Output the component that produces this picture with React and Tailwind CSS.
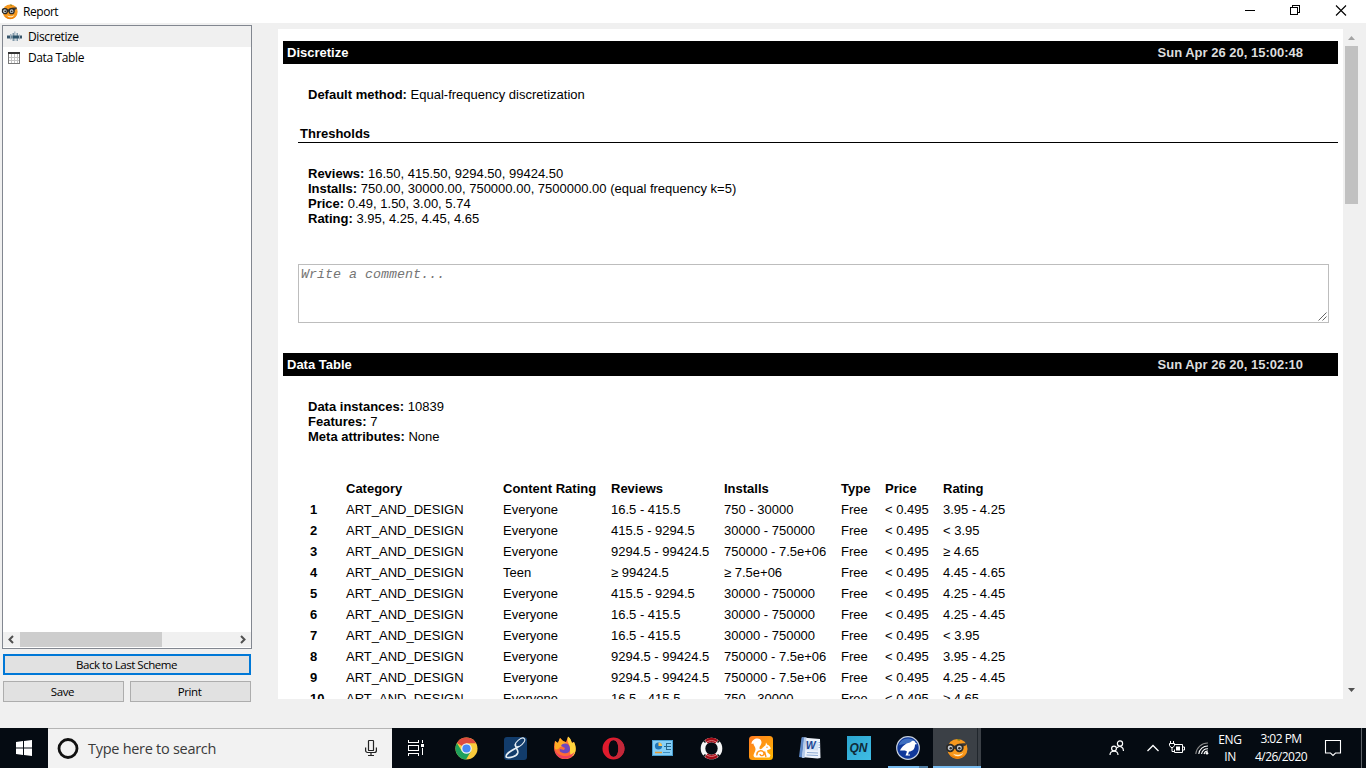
import React from "react";

const thresholds = [
  ["Reviews:", "16.50, 415.50, 9294.50, 99424.50"],
  ["Installs:", "750.00, 30000.00, 750000.00, 7500000.00 (equal frequency k=5)"],
  ["Price:", "0.49, 1.50, 3.00, 5.74"],
  ["Rating:", "3.95, 4.25, 4.45, 4.65"],
];

const summary = [
  ["Data instances:", "10839"],
  ["Features:", "7"],
  ["Meta attributes:", "None"],
];

const rows = [
  ["Everyone", "16.5 - 415.5", "750 - 30000", "3.95 - 4.25"],
  ["Everyone", "415.5 - 9294.5", "30000 - 750000", "< 3.95"],
  ["Everyone", "9294.5 - 99424.5", "750000 - 7.5e+06", "≥ 4.65"],
  ["Teen", "≥ 99424.5", "≥ 7.5e+06", "4.45 - 4.65"],
  ["Everyone", "415.5 - 9294.5", "30000 - 750000", "4.25 - 4.45"],
  ["Everyone", "16.5 - 415.5", "30000 - 750000", "4.25 - 4.45"],
  ["Everyone", "16.5 - 415.5", "30000 - 750000", "< 3.95"],
  ["Everyone", "9294.5 - 99424.5", "750000 - 7.5e+06", "3.95 - 4.25"],
  ["Everyone", "9294.5 - 99424.5", "750000 - 7.5e+06", "4.25 - 4.45"],
  ["Everyone", "16.5 - 415.5", "750 - 30000", "≥ 4.65"],
];

const tableGrid =
  "grid h-[21px] grid-cols-[36px_157px_108px_113px_117px_44px_58px_80px] items-center whitespace-nowrap";

function OrangeLogo({ className }) {
  return (
    <svg className={className} viewBox="0 0 24 24">
      <circle cx="13" cy="12.500" r="10.500" fill="#f7981d" />
      <path d="M4 17.500a10.500 10.500 0 0 0 18 0c-4 4-13 4.500-18 0z" fill="#ea7c06" />
      <path d="M8.500 17.500c3 1.800 7.500 1.500 10.500-1-1.500 4.200-8 5-10.500 1z" fill="#fff0cf" />
      <path d="M1 8.500c3-1.500 6-.5 9 .5 3-2 7-2.500 12.500-2.500l-.5 2-3 1.500v2l-8 .5-8-1z" fill="#3d3934" />
      <circle cx="5.500" cy="11.500" r="3.500" fill="#c4cad0" stroke="#2b2926" strokeWidth="1.800" />
      <circle cx="15" cy="11.500" r="3.500" fill="#c4cad0" stroke="#2b2926" strokeWidth="1.800" />
      <circle cx="6" cy="11.800" r="1.300" fill="#2b2926" />
      <circle cx="15" cy="11.800" r="1.300" fill="#2b2926" />
      <path d="M13 2.800l2.500.4" stroke="#6b7b1b" strokeWidth="1.300" />
    </svg>
  );
}

function ReportHeader({ title, date }) {
  return (
    <div className="flex h-[23px] items-center justify-between bg-black pr-[35px] pl-1 font-bold">
      <span className="text-white">{title}</span>
      <span className="text-[#dddddd]">{date}</span>
    </div>
  );
}

function Pairs({ items }) {
  return items.map(([k, v]) => (
    <div key={k} className="h-[15px] whitespace-nowrap">
      <b>{k}</b> {v}
    </div>
  ));
}

function TitleBar() {
  return (
    <div className="flex h-[23px] shrink-0 items-center bg-white">
      <OrangeLogo className="ml-px h-[17px] w-[17px]" />
      <span className="ml-[5px] text-[12px] leading-4 tracking-[-0.45px]">Report</span>
      <svg className="ml-auto h-[23px] w-[130px]" viewBox="0 0 130 23" fill="none" stroke="#000" shapeRendering="crispEdges">
        <path d="M9 10.500h10M54.500 7.500h7v7h-7zM56.500 7v-1.500h7v7H62" />
        <path d="M100 5.500l10 10M110 5.500l-10 10" shapeRendering="auto" strokeWidth="1.100" />
      </svg>
    </div>
  );
}

function Sidebar() {
  const button =
    "flex h-[21px] items-center justify-center bg-[#e1e1e1] text-[11.5px] leading-4";
  return (
    <div className="flex w-[250px] shrink-0 flex-col">
      <div className="flex h-[624px] flex-col border border-[#828790] bg-white text-[12px] tracking-[-0.38px]">
        <div className="flex h-[21px] items-center bg-[#f0f0f0] pl-1">
          <svg className="h-4 w-4" viewBox="0 0 16 16">
            <path d="M0 6.500h5v3H0zM11 6.500h4v3h-4z" fill="#38566c" />
            <path d="M3 5h1.500v5.500H3zM12 5.500h1v5h-1z" fill="#9fb2bf" />
            <path d="M5.500 4H7v8H5.500zM9.500 4H11v8H9.500z" fill="#8299aa" />
            <path d="M7 2.500h1.500V12H7z" fill="#aebdc8" />
            <path d="M5.500 6.500H11v3H5.500z" fill="#2c5269" />
          </svg>
          <span className="ml-[5px]">Discretize</span>
        </div>
        <div className="flex h-[21px] items-center pl-[5px]">
          <svg className="h-3 w-3" viewBox="0 0 12 12" shapeRendering="crispEdges">
            <path d="M0 0h12v12H0z" fill="#777" />
            <path d="M1 2h10v9H1z" fill="#fff" />
            <path d="M1 5.500h10M1 8.500h10M3.500 2v9M6.500 2v9M9.500 2v9" stroke="#c2c2c2" />
            <path d="M0 0h12v2H0z" fill="#333" />
          </svg>
          <span className="ml-2">Data Table</span>
        </div>
        <div className="mt-auto mb-px flex h-[15px] items-stretch bg-[#f0f0f0]">
          <svg className="w-[17px]" viewBox="0 0 17 15" fill="none" stroke="#505050" strokeWidth="2">
            <path d="M10 4L6.500 7.500 10 11" />
          </svg>
          <div className="w-[142px] bg-[#cdcdcd]" />
          <svg className="ml-auto w-[17px]" viewBox="0 0 17 15" fill="none" stroke="#505050" strokeWidth="2">
            <path d="M7 4l3.500 3.500L7 11" />
          </svg>
        </div>
      </div>
      <div className={`${button} mt-[5px] ml-px w-[248px] border-2 border-[#0078d7] pr-[2px] tracking-[-0.47px]`}>
        <span className="ml-[1px]">Back to Last Scheme</span>
      </div>
      <div className="mt-[6px] ml-px flex gap-[6px]">
        <div className={`${button} w-[121px] border border-[#adadad] pr-[2px] tracking-[-0.4px]`}>Save</div>
        <div className={`${button} w-[121px] border border-[#adadad] pr-[2px] tracking-[-0.4px]`}>Print</div>
      </div>
    </div>
  );
}

function Report() {
  return (
    <div className="mt-[6px] ml-[26px] h-[670px] w-[1065px] shrink-0 overflow-hidden bg-white px-[5px] pt-3 font-['Liberation_Sans',Arial,sans-serif] text-[13px] leading-[15px] text-black">
      <ReportHeader title="Discretize" date="Sun Apr 26 20, 15:00:48" />
      <div className="mt-[23px] pl-[25px]">
        <Pairs items={[["Default method:", "Equal-frequency discretization"]]} />
      </div>
      <div className="mt-6 ml-[15px] flex h-[17px] border-b border-black pl-[2px] font-bold">Thresholds</div>
      <div className="mt-[23px] pl-[25px]">
        <Pairs items={thresholds} />
      </div>
      <div className="mt-[38px] ml-[15px] flex h-[59px] w-[1031px] justify-between border border-[#bdbdbd] pt-[2px] pl-[2px] font-['Liberation_Mono','Courier_New',monospace] text-[13.33px] text-[#757575] italic">
        <span>Write a comment...</span>
        <svg className="mr-px mb-px h-[9px] w-[9px] self-end" viewBox="0 0 9 9" stroke="#555" strokeWidth=".9" fill="none">
          <path d="M.5 8.500l8-8M4.500 8.500l4-4" />
        </svg>
      </div>
      <div className="mt-[30px]">
        <ReportHeader title="Data Table" date="Sun Apr 26 20, 15:02:10" />
      </div>
      <div className="mt-[23px] pl-[25px]">
        <Pairs items={summary} />
      </div>
      <div className="mt-[34px] pl-[27px]">
        <div className={`${tableGrid} font-bold`}>
          <span />
          <span>Category</span>
          <span>Content Rating</span>
          <span>Reviews</span>
          <span>Installs</span>
          <span>Type</span>
          <span>Price</span>
          <span>Rating</span>
        </div>
        {rows.map(([content, reviews, installs, rating], i) => (
          <div key={i} className={tableGrid}>
            <b>{i + 1}</b>
            <span>ART_AND_DESIGN</span>
            <span>{content}</span>
            <span>{reviews}</span>
            <span>{installs}</span>
            <span>Free</span>
            <span>&lt; 0.495</span>
            <span>{rating}</span>
          </div>
        ))}
      </div>
    </div>
  );
}

function Cell({ children, className = "" }) {
  return <div className={`flex h-full w-[49px] shrink-0 items-center justify-center ${className}`}>{children}</div>;
}

function Taskbar() {
  return (
    <div className="flex h-10 shrink-0 items-center bg-[#050b12] text-white">
      <div className="flex w-12 justify-center">
        <svg className="h-4 w-4" viewBox="0 0 16 16" fill="#fff">
          <path d="M0 2l7-1v6.500H0zM8 .9L16 0v7.500H8zM0 8.500h7V15l-7-1zM8 8.500h8V16l-8-1z" />
        </svg>
      </div>
      <div className="flex h-full w-[344px] items-center border-t border-[#b4b4b4] bg-[#f2f2f2] pl-[9px]">
        <svg className="h-[22px] w-[22px]" viewBox="0 0 22 22">
          <circle cx="11" cy="10.500" r="9" fill="none" stroke="#111" strokeWidth="2.800" />
        </svg>
        <span className="ml-[9px] text-[14.5px] tracking-[-0.28px] whitespace-nowrap text-[#3a3a3a]">Type here to search</span>
        <svg className="mr-[14px] mb-[2px] ml-auto h-[18px] w-[14px]" viewBox="0 0 14 18" fill="none" stroke="#222" strokeWidth="1.200">
          <rect x="4.500" y="1.500" width="5" height="10" rx=".6" />
          <path d="M1.600 8.500v3a2 2 0 0 0 2 2h6.800a2 2 0 0 0 2-2v-3M7 13.500v3M4 16.500h6" />
        </svg>
      </div>
      <div className="flex h-full w-[50px] shrink-0 items-center justify-center pr-[2px]">
        <svg className="h-4 w-[18px]" viewBox="0 0 18 16" fill="none" stroke="#fff" shapeRendering="crispEdges">
          <path d="M1.500 0v2.500h10V0M1.500 16v-2.500h10V16M1.500 5.500h10v5h-10zM15.500 0v3M15.500 8v7" />
          <path d="M14 4h3v3h-3z" fill="#fff" stroke="none" />
        </svg>
      </div>
      <Cell>
        <svg className="h-[23px] w-[23px]" viewBox="0 0 24 24">
          <circle cx="12" cy="12" r="11.500" fill="#fbcb3b" />
          <path d="M12 12L2 6.250A11.500 11.500 0 0 1 22 6.500H12z" fill="#dd4b3e" />
          <path d="M2 6.250A11.500 11.500 0 0 0 11.500 23.500L16.800 14.600 12 12 7.200 14.800z" fill="#1fa15d" />
          <circle cx="12" cy="12" r="5.500" fill="#f5f5f5" />
          <circle cx="12" cy="12" r="4.300" fill="#4688f4" />
        </svg>
      </Cell>
      <Cell>
        <svg className="h-[23px] w-[23px]" viewBox="0 0 23 23" fill="none" stroke="#e4edf3" strokeLinecap="round">
          <rect width="23" height="23" rx="3" fill="#123c6b" stroke="none" />
          <ellipse cx="16" cy="5.500" rx="5.800" ry="2.800" transform="rotate(-42 16 5.500)" strokeWidth="1.100" />
          <path d="M11.500 7.500c-.6 3.500 3 5 2.300 8.200-.9 3.500-8 5.800-11.500 4.500-1.800-4 7.500-7.500 12-10.500" strokeWidth="1.600" />
        </svg>
      </Cell>
      <Cell>
        <svg className="h-6 w-6" viewBox="0 0 24 24">
          <path d="M2 5l3 2 2-5 3 3 3 1 2-5c3 2 3 4 4 6l2-1c3 7 2 17-9 17C3 23-1 14 2 5z" fill="#ff6b35" />
          <path d="M15 .5c3 2 3 4.500 4 6.500l2-1c3 6 2 11-1 14-3 0-3-3-3-7 0-6-4-6-2-12.500z" fill="#ffd43d" />
          <path d="M2 5l3 2 2-5 3 3 4 2-1 3-6 1c-1 2-3 3-5 2z" fill="#ffad24" />
          <path d="M8 10c2-4 9-3 9 3 0 4-4 5-7 4-3-1-4-2-3-4l4 1 1-2z" fill="#6d48bd" />
          <path d="M1.500 13c2 5 6 7 11 7 4 0 7-2 9-4-3 9-18 10-20-3z" fill="#ee3f5f" />
        </svg>
      </Cell>
      <Cell>
        <svg className="h-[23px] w-[23px]" viewBox="0 0 23 23">
          <path fillRule="evenodd" d="M11.500.5a11 11 0 1 0 0 22 11 11 0 0 0 0-22zM11.500 3c3 0 4.800 4 4.800 8.500s-1.800 8.500-4.800 8.500-4.800-4-4.800-8.500S8.500 3 11.500 3z" fill="#e01b2d" />
          <path d="M8 4.500C13-1 22.500 3 22.500 11.500S13 24 8 18.500c7 4 8.300-2.500 8.300-7S15 .5 8 4.500z" fill="#c2283a" />
        </svg>
      </Cell>
      <Cell>
        <svg className="h-4 w-[21px]" viewBox="0 0 21 16">
          <rect x=".5" y=".5" width="20" height="15" fill="#86cff7" stroke="#4aa0d2" />
          <circle cx="6.500" cy="6" r="3.600" fill="#2075b6" />
          <path d="M6.500 6V2.400A3.600 3.600 0 0 1 10.100 6z" fill="#ffc453" />
          <path d="M12 6.500h3M14.500 3v7M15 3.500h4M15 6.500h4M15 9.500h4" stroke="#24678f" />
          <path d="M3 12.500h7" stroke="#e49831" strokeWidth="1.500" />
          <path d="M11 12.500h7" stroke="#3f8fc0" />
        </svg>
      </Cell>
      <Cell>
        <svg className="h-[23px] w-[23px]" viewBox="0 0 23 23" fill="none">
          <circle cx="11.500" cy="11.500" r="8.500" stroke="#f4f4f4" strokeWidth="4.600" />
          <path d="M6.300 4.800a8.500 8.500 0 0 1 10.400 0M6.300 18.200a8.500 8.500 0 0 0 10.400 0" stroke="#a20b16" strokeWidth="4.600" />
          <path d="M3.500 3.500l2 2M19.500 3.500l-2 2M3.500 19.500l2-2M19.500 19.500l-2-2" stroke="#111" strokeWidth="1.600" />
          <path d="M7 4.800c3-1.600 6-1.600 9 0M7 18.200c3 1.600 6 1.600 9 0" stroke="#e58787" strokeWidth=".9" />
        </svg>
      </Cell>
      <Cell>
        <svg className="h-6 w-6" viewBox="0 0 24 24">
          <defs>
            <linearGradient id="uc" x1="0" y1="0" x2="1" y2="1">
              <stop offset="0" stopColor="#ff7a21" />
              <stop offset="1" stopColor="#ffb800" />
            </linearGradient>
          </defs>
          <rect width="24" height="24" rx="3.500" fill="url(#uc)" />
          <path d="M2.500 8c0-6 9.500-7.500 10-2 .3 3-2.500 4-2 6.500.3 1 1.500.8 2.500 0 1.500-1.500 2-2.500 3.500-3.300l.5-2.700 1.300 2.200C20.500 9.500 22 11 21.500 13l-3.500 1.200.5 2.300 3 2.500-1 2.500H6c-3.500-2 .5-5 .5-8C6.500 10 4.500 10 4.500 7.500z" fill="#fff" />
          <path d="M8 19.500c-1-5 6.500-6.500 7-2 .2 2.500-3.800 3-4 .5M15.500 15.500l1.500 5.500" stroke="#ff9415" strokeWidth="1.400" fill="none" />
          <circle cx="18" cy="11.300" r=".7" fill="#ff9415" />
        </svg>
      </Cell>
      <Cell>
        <svg className="h-6 w-6" viewBox="0 0 24 24">
          <path d="M4 1.500L22 3l.5 19-3 .5L3 21z" fill="#eef3fb" />
          <path d="M3.500 1.500l3-.5L4 21.500l-3-.5z" fill="#5f88c6" />
          <path d="M6 1.500l2.500-.2L6.500 22H4z" fill="#b6cbe9" />
          <path d="M8 4.500L20 6v8.500L8 14z" fill="#d4e0f2" />
          <path d="M9 16.500l11 .5M8.500 19l11.500.5" stroke="#8ba9d2" />
          <path d="M20.500 6.500h1.500M20.500 9h1.500M20.500 11.500h1.500" stroke="#8ba9d2" />
          <text x="7.800" y="13" fontSize="10.500" fontWeight="bold" fontStyle="italic" fontFamily="Liberation Sans, sans-serif" fill="#1c4593">W</text>
        </svg>
      </Cell>
      <Cell>
        <div className="flex h-6 w-6 items-center justify-center bg-gradient-to-br from-[#2ba5cf] to-[#40bde5] font-['Liberation_Sans',Arial,sans-serif] text-[12px] font-bold text-[#102b39] italic">
          QN
        </div>
      </Cell>
      <Cell className="relative">
        <svg className="h-6 w-6" viewBox="0 0 24 24">
          <circle cx="12" cy="12" r="11.300" fill="#10389a" stroke="#c8d2df" strokeWidth="1.200" />
          <path d="M2.500 9.500a10 10 0 0 1 19 0c-6-2.500-13-2.500-19 0z" fill="#3f6fc0" />
          <path d="M4 14.500c2-4 5-7 10-8l2-1.500c2-.5 3 .2 3.300 1.700l1.700.8-2 1c0 5-3 7-6 7l-1 3h2v1H9.500l1.500-4-2-1z" fill="#fff" />
        </svg>
        <div className="absolute bottom-0 left-[5px] flex h-[2px] w-10">
          <div className="w-[31px] bg-[#76b9ed]" />
          <div className="w-[9px] bg-[#4f7da3]" />
        </div>
      </Cell>
      <Cell className="relative border-l border-[#050b12] bg-[#3b4046]">
        <OrangeLogo className="mr-px h-[23px] w-[23px]" />
        <div className="absolute top-0 right-[3px] h-full w-px bg-[#20262c]" />
        <div className="absolute bottom-0 left-0 h-[2px] w-12 bg-[#76b9ed]" />
      </Cell>
      <svg className="ml-[127px] h-[18px] w-[18px] shrink-0" viewBox="0 0 18 18" fill="none" stroke="#fff" strokeWidth="1.200">
        <circle cx="12" cy="4.500" r="2.600" />
        <circle cx="6" cy="9.500" r="2.400" />
        <path d="M2 16c0-5 8-5 8 0M9 8.700c3-2.500 6.500-.8 6.500 3.300" />
      </svg>
      <svg className="ml-[19px] h-4 w-4 shrink-0" viewBox="0 0 16 16" fill="none" stroke="#fff" strokeWidth="1.300">
        <path d="M2.500 11L8 5.500l5.500 5.500" />
      </svg>
      <svg className="ml-2 h-4 w-4 shrink-0" viewBox="0 0 16 16" fill="none" stroke="#fff">
        <path d="M5.500 4.500h8v8h-8v-3M13.500 7h2v3h-2" />
        <path d="M.5 3.500h5v2l-1.500 2H2L.5 5.500zM1.500 1v2M4.500 1v2M3 8v3.500h2" />
        <path d="M7 6.500h4v4H7z" fill="#fff" stroke="none" />
      </svg>
      <svg className="ml-[10px] h-[14px] w-[14px] shrink-0" viewBox="0 0 14 14" fill="none" stroke="#fff" strokeWidth="1.100">
        <path d="M.8 13A12 12 0 0 1 13 2" stroke="#888" />
        <path d="M3.800 13A9 9 0 0 1 13 5M6.500 13A6.500 6.500 0 0 1 13 7.800" />
        <path d="M9 13a4 4 0 0 1 4-3" />
        <circle cx="12" cy="12.300" r="1.300" fill="#fff" stroke="none" />
      </svg>
      <div className="ml-[6px] w-[30px] text-center text-[12px] leading-[17px] tracking-[-0.35px]">
        ENG
        <br />
        IN
      </div>
      <div className="ml-[5px] w-[62px] text-center text-[12px] leading-[18px] tracking-[-0.52px] whitespace-nowrap">
        3:02 PM
        <br />
        4/26/2020
      </div>
      <svg className="ml-[12px] h-[18px] w-[18px] shrink-0" viewBox="0 0 18 18" fill="none" stroke="#fff" strokeWidth="1.100">
        <path d="M1.500 1.500h15v12.500h-5L9 16.500 6.500 14h-5z" />
      </svg>
      <div className="mr-1 ml-auto h-full w-px bg-[#5d6268]" />
    </div>
  );
}

export default function App() {
  return (
    <div className="flex h-[768px] w-[1366px] flex-col overflow-hidden bg-[#f0f0f0] font-['Open_Sans','Noto_Sans',sans-serif] text-black">
      <TitleBar />
      <div className="flex h-[705px] shrink-0 pt-0 pl-[2px]">
        <div className="pt-[2px]">
          <Sidebar />
        </div>
        <Report />
        <div className="mt-[6px] flex h-[670px] w-[17px] flex-col items-center">
          <svg className="h-[17px] w-[17px]" viewBox="0 0 17 17">
            <path d="M5 11h7L8.500 7z" fill="#a3a3a3" />
          </svg>
          <div className="h-[158px] w-[13px] bg-[#c1c1c1]" />
          <svg className="mt-auto h-[17px] w-[17px]" viewBox="0 0 17 17">
            <path d="M5 6h7l-3.500 4z" fill="#505050" />
          </svg>
        </div>
      </div>
      <Taskbar />
    </div>
  );
}
